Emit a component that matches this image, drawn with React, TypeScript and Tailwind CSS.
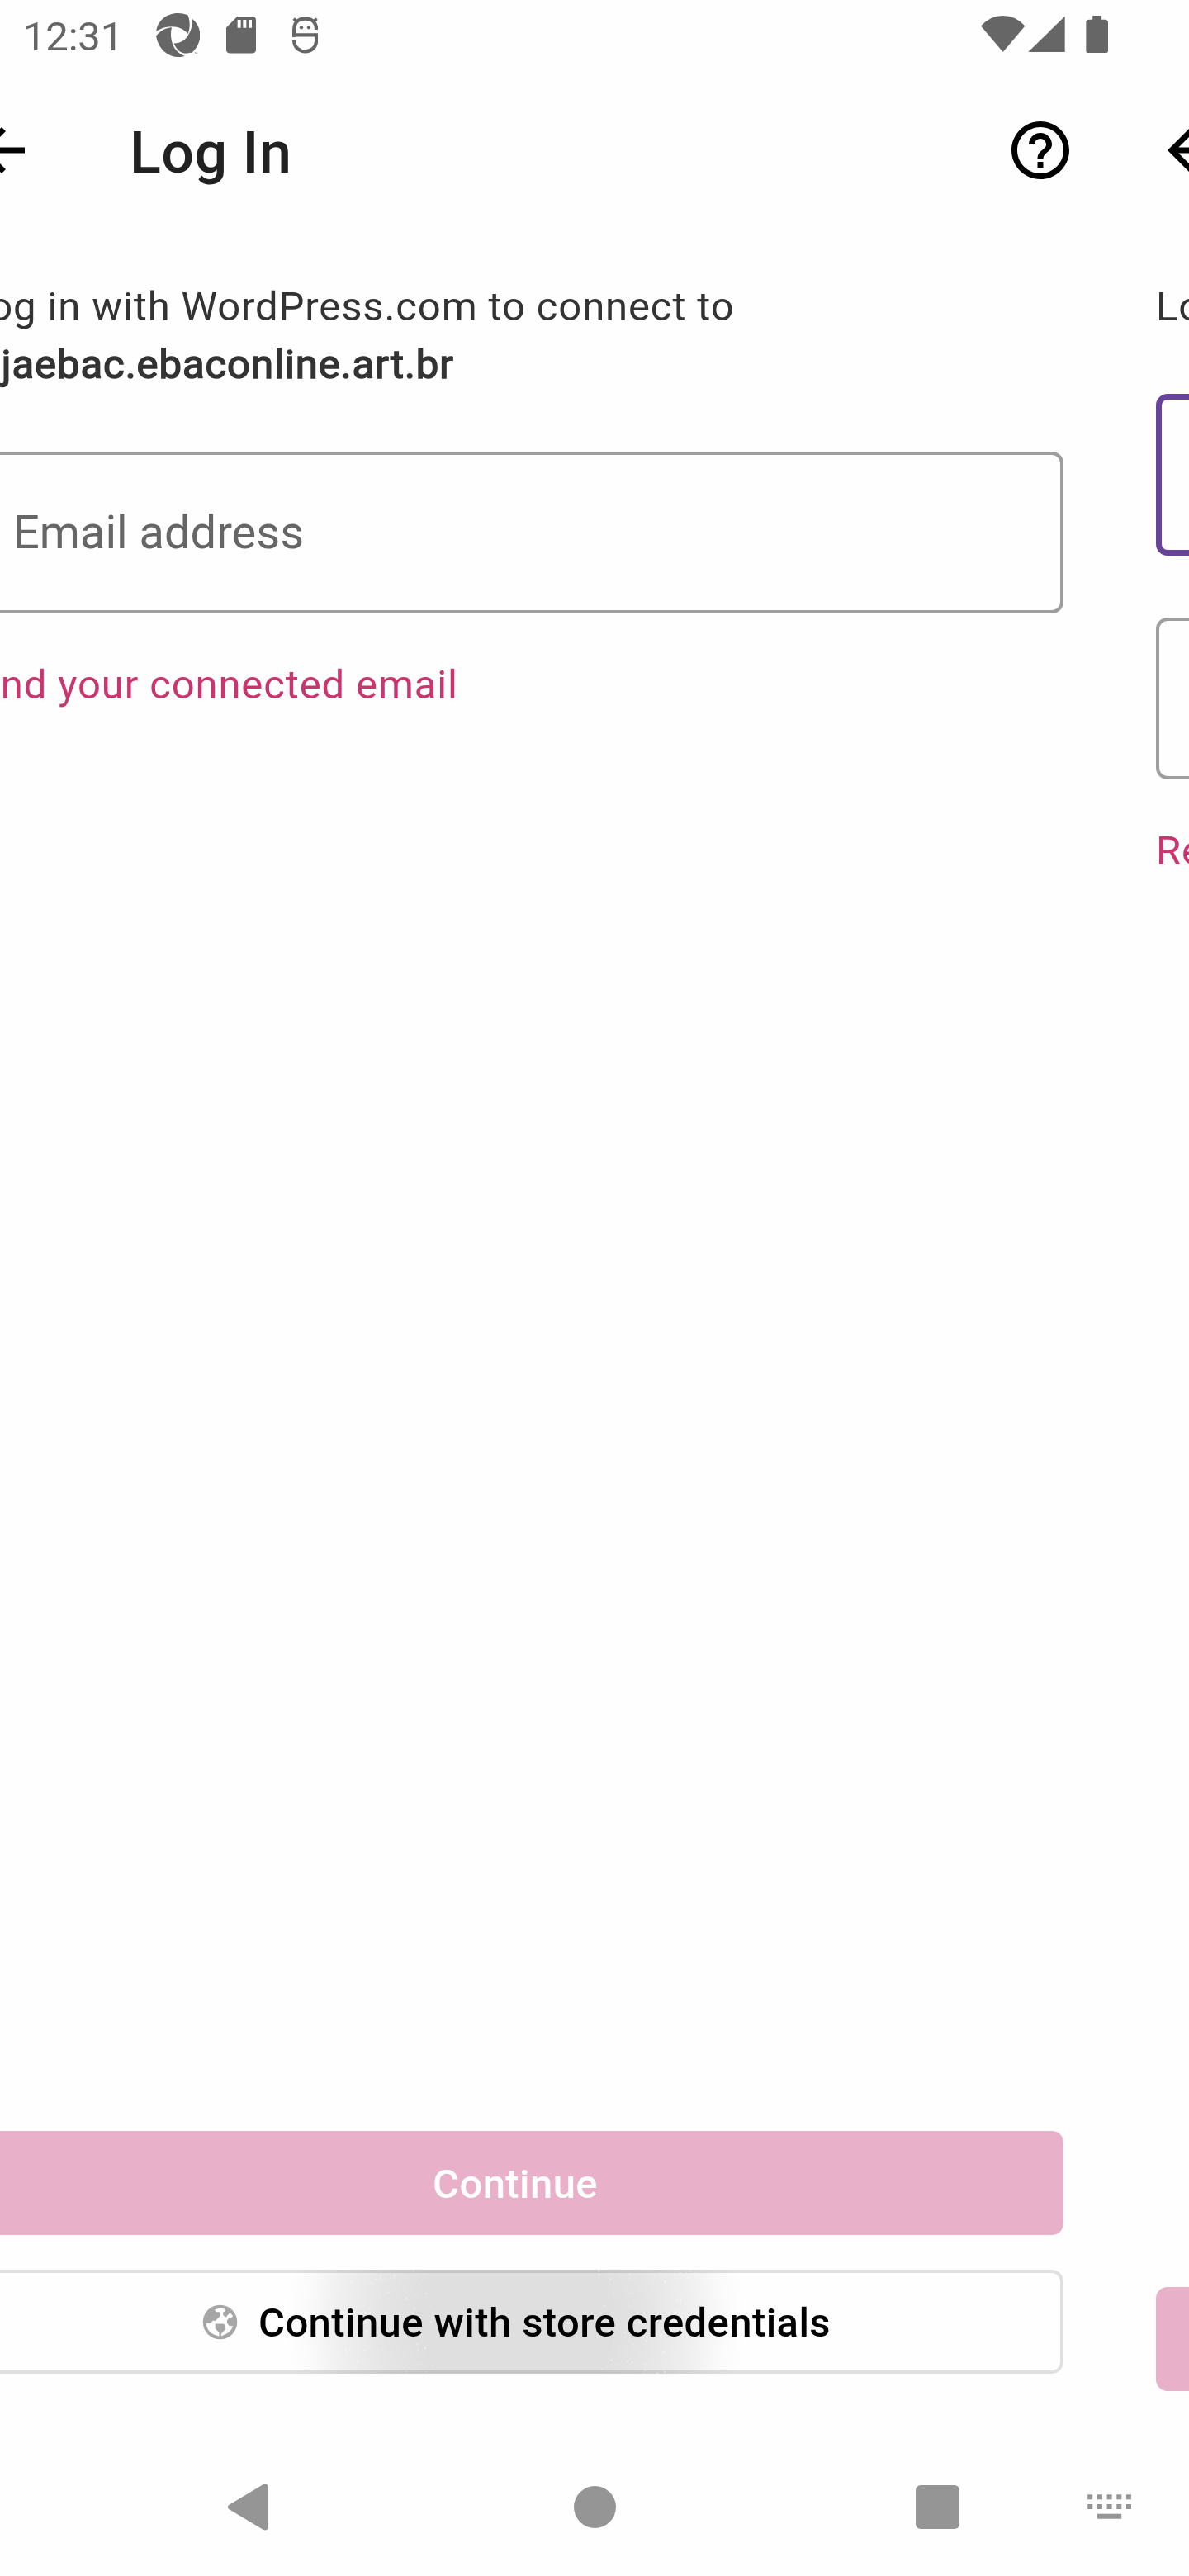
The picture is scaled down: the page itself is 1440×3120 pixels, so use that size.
import React from "react";

const ArrowBack = () => (
  <svg viewBox="0 0 24 24" className="h-[84px] w-[84px] shrink-0" fill="#000">
    <path d="M20 11H7.83l5.59-5.59L12 4l-8 8 8 8 1.41-1.41L7.83 13H20v-2z" />
  </svg>
);

const Help = () => (
  <svg viewBox="0 0 24 24" className="h-[84px] w-[84px] shrink-0" fill="#000">
    <path d="M11 18h2v-2h-2v2zm1-16C6.48 2 2 6.48 2 12s4.48 10 10 10 10-4.48 10-10S17.52 2 12 2zm0 18c-4.41 0-8-3.59-8-8s3.59-8 8-8 8 3.59 8 8-3.59 8-8 8zm0-14c-2.21 0-4 1.79-4 4h2c0-1.1.9-2 2-2s2 .9 2 2c0 2-3 1.75-3 5h2c0-2.25 3-2.5 3-5 0-2.21-1.79-4-4-4z" />
  </svg>
);

const Globe = () => (
  <svg viewBox="0 0 144 144" className="h-[49px] w-[49px] shrink-0">
    <circle cx="72" cy="72" r="61" fill="#a6a6a6" />
    <path
      fill="#fefefe"
      d="M53 28Q62 23 74 23Q86 23 90 27V33L83 37V47L93 54L107 38L118 50L114 56L103 58L97 66V76L105 85L119 86Q108 112 76 122V114L91 98V84L84 78H55V95L69 110V122Q26 114 22 76H39L46 67H56L73 50V40L70 36H58z"
    />
  </svg>
);

// Small specks scattered through the outer part of the touch ripple.
const sparkles = Array.from({ length: 260 }, (_, i) => {
  const a = (Math.sin(i * 127.1) * 43758.5453) % 1;
  const b = Math.abs((Math.sin(i * 311.7) * 24634.6345) % 1);
  const c = Math.abs((Math.sin(i * 74.7) * 9631.345) % 1);
  const r = 100 + c * 125;
  return { x: 280 + (a < 0 ? -r : r), y: b * 126, s: i % 5 === 0 ? 2.5 : 1.4 };
});

const StatusBar = () => (
  <header className="flex h-[98px] items-start text-[#666]">
    <span className="ml-[28px] mt-[16px] w-[161px] text-[49px] leading-[58px] tracking-[-0.2px]">12:31</span>
    <svg viewBox="0 0 160 160" className="mt-[15.7px] h-[53.4px] w-[53.4px]" fill="#666">
      <path d="M1 65C5 28 38 0 79 0C96 0 106 3 116 8C124 31 124 52 116 75C98 52 68 44 35 51C23 54 11 59 1 65z" />
      <path d="M130 19C150 35 160 57 160 80C160 105 147 128 130 144L122 143C109 149 91 143 83 136C75 130 71 122 64 110C91 109 108 97 117 79C130 60 132 39 130 19z" />
      <path d="M0 83C18 61 37 53 57 52C51 75 54 98 63 119C72 136 85 148 105 156C63 168 12 145 0 83z" />
      <path d="M139 142h5v4h-1v-3h-1v3h-1v-3h-2zm6 0h2l1 2l1-2h1v4h-1v-2l-1 2l-1-2v2h-1z" />
    </svg>
    <svg viewBox="0 0 108 133" className="ml-[32px] mt-[20px] h-[44.5px] w-[36px]" fill="#666">
      <path fillRule="evenodd" d="M40 0H95Q108 0 108 13V120Q108 133 95 133H13Q0 133 0 120V40zM41 12V41H53V12zM61 12V41H73V12zM81 12V41H93V12z" />
    </svg>
    <svg viewBox="0 0 94 134" className="ml-[43.5px] mt-[20px] h-[44.7px] w-[31.3px]" fill="none" stroke="#666" strokeWidth="13">
      <path d="M6.5 75V48C6.5 20 24 7.5 47 7.5S87.5 20 87.5 48" />
      <path d="M0 67H87.5V87C87.5 112 68 127 47 127S6.5 112 6.5 86" />
      <path d="M5 8L19 20M89 8L75 20" strokeWidth="11" />
      <circle cx="33" cy="40" r="6.5" fill="#666" stroke="none" />
      <circle cx="60" cy="40" r="6.5" fill="#666" stroke="none" />
    </svg>
    <svg viewBox="0 0 156 136" className="ml-auto mt-[19px] h-[45.3px] w-[154px]" preserveAspectRatio="none" fill="#666">
      <path d="M0 37.5Q33 0 80 0Q127 0 160 37.5L80 132z" transform="scale(.338 1)" />
      <path d="M58 132L103 2V132z" />
      <path d="M137 0H148V14H152Q156 14 156 25V128Q156 136 152 136H133Q129 136 129 128V25Q129 14 133 14H137z" />
    </svg>
    <div className="w-[98px]" />
  </header>
);

const LoginScreen = () => (
  <section className="flex w-[1440px] shrink-0 flex-col px-[56px]">
    <div className="flex h-[168px] items-center">
      <ArrowBack />
      <h1 className="ml-[113px] mt-[5px] text-[70px] font-medium leading-[82px] tracking-[0.5px] text-[#212121]">Log In</h1>
      <div className="ml-auto mr-[-14px]">
        <Help />
      </div>
    </div>
    <p className="mt-[71px] whitespace-nowrap text-[49px] leading-[70px] tracking-[0.875px] text-[#333]">
      Log in with WordPress.com to connect to
      <br />
      <span className="tracking-[0.95px] [-webkit-text-stroke:1.5px_#333]">lojaebac.ebaconline.art.br</span>
    </p>
    <div className="mt-[70px] flex h-[196px] items-center rounded-[14px] border-4 border-[#9e9e9e] pl-[52px]">
      <span className="text-[56px] leading-[66px] text-[#666]">Email address</span>
    </div>
    <a className="mt-[58px] text-[49px] leading-[58px] tracking-[0.875px] text-[#c9356e]">Find your connected email</a>
    <div className="mb-[77px] mt-auto flex flex-col gap-[42px] text-[49px] font-medium leading-[58px] tracking-[0.41px]">
      <button className="flex h-[126px] items-center justify-center rounded-[14px] bg-[#e9b1c9] pt-[4px] text-white">Continue</button>
      <button className="relative flex h-[126px] items-center overflow-hidden rounded-[14px] pl-[282px] text-black">
        <span className="absolute inset-0 rounded-[14px] border-4 border-[#e0e0e0]" />
        <svg viewBox="0 0 560 126" className="absolute left-[384px] top-0 h-[126px] w-[560px]">
          <defs>
            <radialGradient id="ripple" gradientUnits="userSpaceOnUse" cx="280" cy="63" r="280">
              <stop offset="0.42" stopOpacity="0.122" />
              <stop offset="0.58" stopOpacity="0.1" />
              <stop offset="0.78" stopOpacity="0.055" />
              <stop offset="0.9" stopOpacity="0.015" />
              <stop offset="1" stopOpacity="0" />
            </radialGradient>
          </defs>
          <rect width="560" height="126" fill="url(#ripple)" />
          {sparkles.map((p, i) => (
            <rect key={i} x={p.x} y={p.y} width={p.s} height={p.s} fill="#fff" opacity="0.3" />
          ))}
        </svg>
        <span className="relative flex items-center whitespace-nowrap">
          <Globe />
          <span className="ml-[22px] mt-[4px]">Continue with store credentials</span>
        </span>
      </button>
    </div>
  </section>
);

const PasswordScreen = () => (
  <section className="flex w-[1440px] shrink-0 flex-col px-[56px]">
    <div className="flex h-[168px] items-center">
      <ArrowBack />
    </div>
    <p className="mt-[71px] text-[49px] leading-[70px] tracking-[0.875px] text-[#333]">Log in</p>
    <div className="mt-[70px] h-[196px] rounded-[14px] border-[7px] border-[#674399]" />
    <div className="mt-[75px] h-[196px] rounded-[14px] border-4 border-[#9e9e9e]" />
    <a className="mt-[58px] text-[49px] leading-[58px] tracking-[0.875px] text-[#c9356e]">Reset your password</a>
    <div className="mb-[56px] mt-auto h-[126px] rounded-[14px] bg-[#e9b1c9]" />
  </section>
);

const NavBar = () => (
  <nav className="flex h-[168px] items-center">
    <svg viewBox="0 0 50 57" className="ml-[275px] h-[57px] w-[50px]" fill="#959595">
      <path d="M43.5 1.2Q46 0 48 1Q50 2 50 5V52Q50 55 48 56Q46 57 43.5 55.8L3 31.5Q.8 30.5.8 28.5T3 25.5z" />
    </svg>
    <div className="ml-[369.5px] h-[51px] w-[51px] rounded-full bg-[#959595]" />
    <div className="ml-[363px] h-[53px] w-[53px] rounded-[6px] bg-[#959595]" />
    <svg viewBox="0 0 54 30" className="ml-[155px] h-[30px] w-[54px]" fill="#959595">
      {[0, 1, 2, 3, 4].map((i) => (
        <g key={i}>
          <rect x={0.2 + i * 11.7} y="0.3" width="6" height="6" />
          <rect x={0.2 + i * 11.7} y="12" width="6" height="6" />
        </g>
      ))}
      <rect x="12" y="23.7" width="29.2" height="6" />
    </svg>
  </nav>
);

export default function App() {
  return (
    <div className="flex h-[3120px] w-[1440px] flex-col overflow-hidden bg-[#fefefe] font-['Roboto',sans-serif]">
      <StatusBar />
      <main className="-ml-[96px] flex min-h-0 flex-1">
        <LoginScreen />
        <PasswordScreen />
      </main>
      <NavBar />
    </div>
  );
}
